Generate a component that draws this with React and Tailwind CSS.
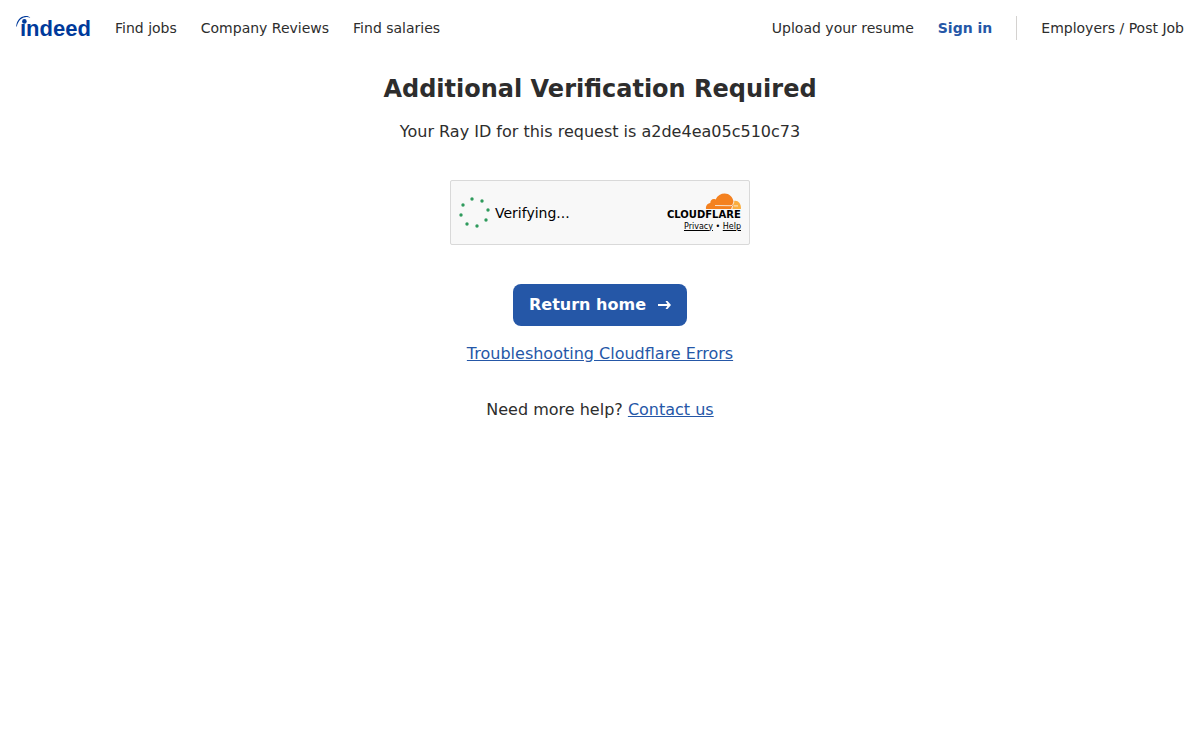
const navLinks = ["Find jobs", "Company Reviews", "Find salaries"];

const spinnerDots = [
  [13, 2], [23, 4], [29, 13], [27, 23], [18, 29], [8, 27], [2, 18], [4, 8],
];

export default function App() {
  return (
    <div className="min-h-screen bg-white font-['DejaVu_Sans',sans-serif] text-[#2d2d2d]">
      <Header />
      <main className="flex flex-col items-center px-4 pt-4 text-center">
        <h1 className="text-2xl leading-[34px] font-bold">Additional Verification Required</h1>
        <p className="mt-[14px] text-base">Your Ray ID for this request is a2de4ea05c510c73</p>
        <Turnstile />
        <button
          type="button"
          className="mt-[39px] flex h-[42px] items-center gap-3 rounded-lg bg-[#2557a7] px-4 text-base font-bold text-white"
        >
          Return home <ArrowIcon />
        </button>
        <a href="#troubleshooting" className="mt-4 text-base text-[#2557a7] underline">
          Troubleshooting Cloudflare Errors
        </a>
        <p className="mt-8 text-base">
          Need more help? <a href="#contact" className="text-[#2557a7] underline">Contact us</a>
        </p>
      </main>
    </div>
  );
}

function Header() {
  return (
    <header className="flex h-14 items-center justify-between px-4 text-sm">
      <nav className="flex items-center gap-6">
        <a href="#home" aria-label="Indeed home">
          <IndeedLogo />
        </a>
        {navLinks.map(label => <a key={label} href="#nav">{label}</a>)}
      </nav>
      <nav className="flex items-center gap-6">
        <a href="#resume">Upload your resume</a>
        <a href="#signin" className="font-bold text-[#2557a7]">Sign in</a>
        <span className="h-6 border-l border-[#d4d2d0]" />
        <a href="#employers">Employers / Post Job</a>
      </nav>
    </header>
  );
}

function Turnstile() {
  return (
    <div className="mt-9 flex h-[65px] w-[300px] items-center justify-between rounded-xs border border-[#d9d9d9] bg-[#f8f8f8] px-2">
      <div className="flex items-center gap-1 text-sm text-black">
        <svg width="32" height="32" viewBox="0 0 32 32" fill="#2f9a5c" aria-hidden="true">
          {spinnerDots.map(([x, y]) => <circle key={`${x}-${y}`} cx={x} cy={y} r="1.7" />)}
        </svg>
        Verifying...
      </div>
      <div className="flex flex-col items-end text-black">
        <CloudflareLogo />
        <div className="text-[8px] leading-3">
          <a href="#privacy" className="underline">Privacy</a> • <a href="#help" className="underline">Help</a>
        </div>
      </div>
    </div>
  );
}

function IndeedLogo() {
  return (
    <svg width="75" height="24" viewBox="0 0 75 24" fill="#003a9b" aria-hidden="true">
      <path d="M.2 10.500C.8 4.500 4 .8 9 .1c2.200-.3 4 .3 5.300 1.800C12.600 1 11 .9 9.200 1.200 5 1.900 2 5 .9 10.500Z" />
      <circle cx="8.400" cy="5.400" r="2.300" />
      <text x="4" y="20" fontSize="22" className="font-['Liberation_Sans',sans-serif] font-bold">ındeed</text>
    </svg>
  );
}

function CloudflareLogo() {
  return (
    <svg width="74" height="28" viewBox="0 0 74 28" aria-hidden="true">
      <path
        d="M39 16c-.4-3 1.200-5.500 4.300-6-.2-2.900 2.400-5 5.300-3.600C50.500 2.400 54 .5 57.700.5c4.400 0 7.800 3.200 8.700 7.500l.3 3-1.700 5Z"
        fill="#f48120"
      />
      <path d="M65.200 16c.8-2.300 1.300-3.300 1-5 .2-2 .6-3 1.400-3.300 4-.5 6.900 3.600 6.300 8.300Z" fill="#faad3f" />
      <path
        d="M48 12.500 64 12.700c1.700-.3 2.400-2 3-4.300M67 12.900h4M64.500 16l1.300-3.500"
        fill="none"
        stroke="#f8f8f8"
        strokeWidth=".8"
      />
      <text x="0" y="25" fontSize="10" fill="#000" className="font-['DejaVu_Sans',sans-serif] font-bold">CLOUDFLARE</text>
    </svg>
  );
}

function ArrowIcon() {
  return (
    <svg width="13" height="10" viewBox="0 0 13 10" fill="none" stroke="currentColor" strokeWidth="2" aria-hidden="true">
      <path d="M0 5h11" />
      <path d="M7.500 1h2L13 5 9.500 9h-2L10 5Z" fill="currentColor" stroke="none" />
    </svg>
  );
}
